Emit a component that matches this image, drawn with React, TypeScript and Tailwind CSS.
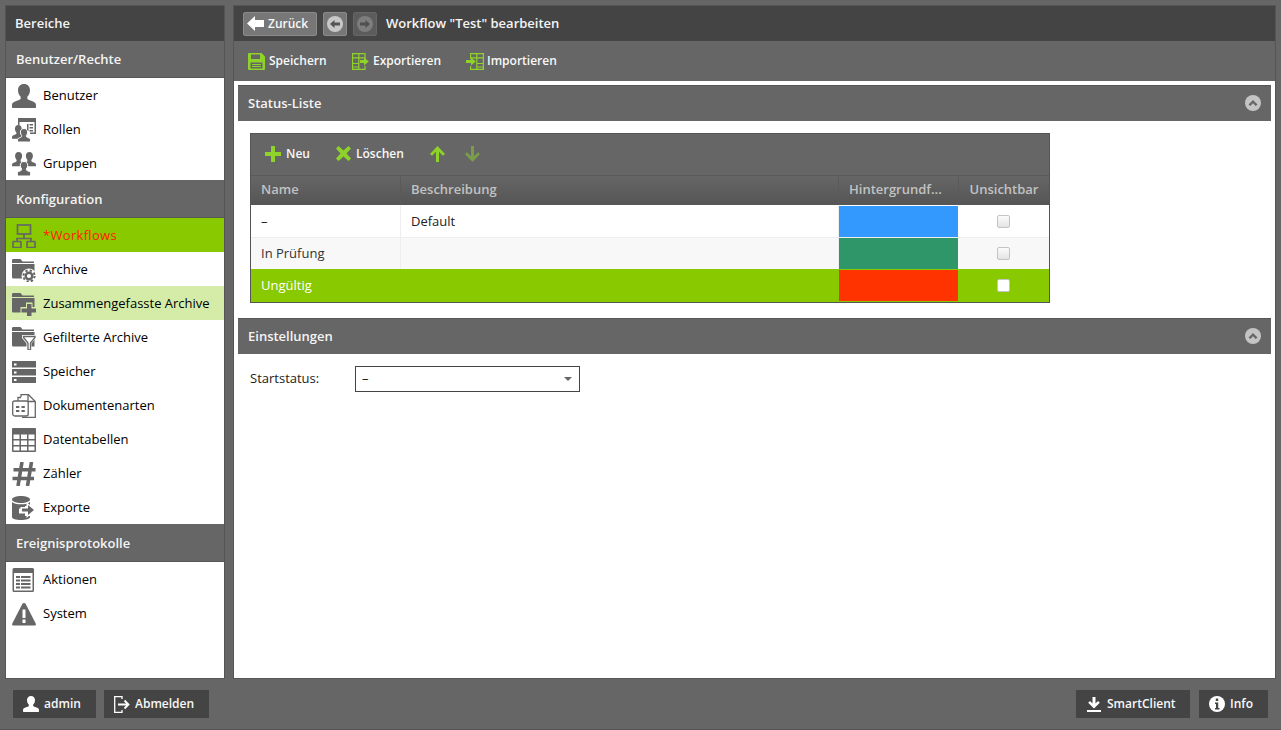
import React from "react";

const G = "#666666";
const L = "#8fd32a";

type P = { size?: number; c?: string };

const User = ({ size = 24, c = G }: P) => (
  <svg width={size} height={size} viewBox="0 0 24 24" fill={c}>
    <path d="M12 0c3.700 0 6 2.600 6 6.200 0 2.700-1.100 5-2.700 6.600v1.800c0 .8 1.200 1.300 3 2 2.700 1 5.700 1.800 5.700 4.400v2c0 .6-.4 1-1 1H1c-.6 0-1-.4-1-1v-2c0-2.600 3-3.400 5.700-4.400 1.800-.7 3-1.200 3-2v-1.800C7.100 11.200 6 8.900 6 6.200 6 2.600 8.300 0 12 0z" />
  </svg>
);

const Person = ({ x, y, s, c = G }: { x: number; y: number; s: number; c?: string }) => (
  <path
    transform={`translate(${x} ${y}) scale(${s})`}
    fill={c}
    d="M6 0c2 0 3.200 1.500 3.200 3.500 0 1.500-.6 2.800-1.400 3.700v1c0 .6 1 1 2 1.300 1.200.4 2.200.9 2.200 2.100V13H0v-1.400c0-1.200 1-1.700 2.200-2.100 1-.3 2-.7 2-1.300v-1C3.400 6.300 2.800 5 2.800 3.500 2.800 1.500 4 0 6 0z"
  />
);

const Roles = () => (
  <svg width="24" height="24" viewBox="0 0 24 24" fill={G}>
    <path d="M6 0h18v16h-6v-1.500h4.500V4H7.500v3H6z" />
    <path d="M15 6h1.500v7H15zM17.500 6H21v1.500h-3.500zM17.500 9H21v1.500h-3.500zM17.500 12H21v1.500h-3.500z" />
    <Person x={0} y={7} s={1.05} />
    <path d="M12 10.500c2.200 0 3.600 1.600 3.600 3.700 0 1.400-.5 2.600-1.300 3.400v.7c0 .7 1 1 2.200 1.500 1.100.4 2 .9 2 1.900V24H5.500v-2.300c0-1 .9-1.500 2-1.900 1.200-.5 2.200-.8 2.200-1.500v-.7c-.8-.8-1.300-2-1.300-3.400 0-2.100 1.400-3.700 3.600-3.700z" stroke="#fff" strokeWidth="1" />
  </svg>
);

const Groups = () => (
  <svg width="24" height="24" viewBox="0 0 24 24">
    <Person x={0} y={0} s={1.1} />
    <Person x={10.8} y={0} s={1.1} />
    <path d="M12 9.500c2.300 0 3.700 1.600 3.700 3.800 0 1.400-.5 2.700-1.300 3.500v.9c0 .7 1 1 2.200 1.500 1.100.4 2 .9 2 2V24H5.400v-2.800c0-1.100.9-1.600 2-2 1.200-.5 2.200-.8 2.200-1.500v-.9c-.8-.8-1.300-2.100-1.300-3.500 0-2.200 1.400-3.800 3.700-3.800z" fill={G} stroke="#fff" strokeWidth="1" />
  </svg>
);

const Network = () => (
  <svg width="24" height="24" viewBox="0 0 24 24" fill="none" stroke={G} strokeWidth="1.700">
    <rect x="5.500" y="1" width="13" height="9" />
    <path d="M12 10v4M5 18v-3.500h14V18" />
    <rect x="1" y="17.500" width="8" height="6" rx="0.500" />
    <rect x="15" y="17.500" width="8" height="6" rx="0.500" />
  </svg>
);

const Folder = ({ children }: { children?: React.ReactNode }) => (
  <svg width="24" height="24" viewBox="0 0 24 24">
    <path d="M0 2.500C0 1.500.5 1 1.500 1h7l2 2.500H22V5H0z" fill={G} />
    <path d="M0 6h22.500v14.500H1.500C.5 20.500 0 20 0 19z" fill={G} />
    {children}
  </svg>
);

const Gear = () => (
  <g>
    <circle cx="17" cy="18" r="7.500" fill="#fff" />
    <circle cx="17" cy="18" r="5.600" fill="none" stroke={G} strokeWidth="2" strokeDasharray="2.300 2.100" />
    <circle cx="17" cy="18" r="3.300" fill="#fff" stroke={G} strokeWidth="2.400" />
  </g>
);

const PlusFolder = () => (
  <Folder>
    <path d="M14 10.500h6.500V15H24v6.500h-3.500V24H14v-2.500H8.500V15H14z" fill="#d5eca8" />
    <path d="M15 12h4.500v4.500H24v4h-4.500V24H15v-3.500H9.500v-4H15z" fill={G} />
  </Folder>
);

const FunnelFolder = () => (
  <Folder>
    <path d="M10 9h14v3l-4.500 5.500V25h-5v-7.500L10 12z" fill="#fff" />
    <path d="M11.500 10.500h11.500v1l-4.500 5.500v7h-2.500v-7l-4.500-5.500z" fill="none" stroke={G} strokeWidth="1.300" />
  </Folder>
);

const Storage = () => (
  <svg width="24" height="24" viewBox="0 0 24 24" fill={G}>
    <path d="M0 1h24v6.500H0zM0 9h24v6.500H0zM0 17h24v6H0z" fill={G} />
    <path d="M2 3.500h2.500v2H2zM2 11.500h2.500v2H2zM2 19h2.500v2H2z" fill="#fff" />
  </svg>
);

const DocType = () => (
  <svg width="24" height="24" viewBox="0 0 24 24" fill="none" stroke={G} strokeWidth="1.300">
    <path d="M6 7V3.500h3M9 3V.7h7.500l6.800 6.800v15.800H10" />
    <path d="M16 1v6.500h7" />
    <rect x="0.700" y="7" width="15.500" height="15" rx="2" fill="#fff" />
    <path d="M4 12h3.300v2H4zM9.500 12h3.300v2H9.500zM4 16h3.300v2H4zM9.500 16h3.300v2H9.500z" fill={G} stroke="none" />
  </svg>
);

const TableIcon = () => (
  <svg width="24" height="24" viewBox="0 0 24 24" fill={G}>
    <path fillRule="evenodd" d="M1 0h22a1 1 0 0 1 1 1v22a1 1 0 0 1-1 1H1a1 1 0 0 1-1-1V1a1 1 0 0 1 1-1zM1.500 6.500v4.500h6V6.500zM9 6.500v4.500h6V6.500zM16.500 6.500v4.500h6V6.500zM1.500 12.500V17h6v-4.500zM9 12.500V17h6v-4.500zM16.500 12.500V17h6v-4.500zM1.500 18.500v4h6v-4zM9 18.500v4h6v-4zM16.500 18.500v4h6v-4z" />
  </svg>
);

const Hash = () => (
  <svg width="24" height="24" viewBox="0 0 24 24" fill="none" stroke={G} strokeWidth="3.600">
    <path d="M10 0L6 24M19.500 0l-4 24M1.500 7.800H23.500M.5 16.500H22" />
  </svg>
);

const Export = () => (
  <svg width="24" height="24" viewBox="0 0 24 24" fill={G}>
    <path d="M0 3.500C0 1.500 4.500 0 9 0s9 1.500 9 3.500S13.500 7 9 7 0 5.500 0 3.500z" />
    <path d="M0 6c1.500 1.500 5 2.300 9 2.300S16.500 7.500 18 6v4h-5v2.500H7v5h6V20h5v1c0 1.800-4 3-9 3s-9-1.200-9-3z" />
    <path d="M14.500 6l9.500 8-9.500 8v-5H8.500v-6h6z" fill="#fff" />
    <path d="M16 9l6 5-6 5v-3.500H10v-3h6z" fill={G} />
  </svg>
);

const Actions = () => (
  <svg width="24" height="24" viewBox="0 0 24 24" fill={G}>
    <path fillRule="evenodd" d="M2 0h18.500a1.500 1.500 0 0 1 1.500 1.500v21a1.500 1.500 0 0 1-1.500 1.500H2a1.500 1.500 0 0 1-1.500-1.500v-21A1.500 1.500 0 0 1 2 0zM2 5v17.500h18.500V5z" />
    <path d="M4 8h4v2H4zM9 8h9.500v2H9zM4 11.500h4v2H4zM9 11.500h9.500v2H9zM4 15h4v2H4zM9 15h9.500v2H9zM4 18.500h4v2H4zM9 18.500h9.500v2H9z" />
  </svg>
);

const Warn = () => (
  <svg width="24" height="24" viewBox="0 0 24 24">
    <path d="M12 1c.8 0 1.300.4 1.700 1.100l10 19.300c.6 1.200 0 2.100-1.300 2.100H1.600C.3 23.500-.3 22.600.3 21.400l10-19.300C10.700 1.400 11.200 1 12 1z" fill={G} />
    <path d="M10.500 7.500h3v8.500h-3zM10.500 17.500h3V21h-3z" fill="#fff" />
  </svg>
);

const Save = () => (
  <svg width="17" height="17" viewBox="0 0 17 17" fill={L}>
    <path fillRule="evenodd" d="M0 1a1 1 0 0 1 1-1h12.500L17 3.500V16a1 1 0 0 1-1 1H1a1 1 0 0 1-1-1zM3 1.500V6h9V1.500zM2.500 9.500V15.500h12V9.500zM4 11h9v1H4zM4 13h9v1H4z" />
  </svg>
);

const TableArrowRight = () => (
  <svg width="17" height="17" viewBox="0 0 17 17" fill="none" stroke={L} strokeWidth="1.200">
    <path d="M13 6V.6H.6v15.800H13V13" />
    <path d="M.6 4.800H13M.6 10.500h6.500M.6 14H7M6.800.6v15.800" />
    <path d="M8 7h4V4.500L16.800 8.500 12 12.500V10H8z" fill={L} stroke="none" />
  </svg>
);

const TableArrowLeft = () => (
  <svg width="18" height="17" viewBox="0 0 18 17" fill="none" stroke={L} strokeWidth="1.200">
    <path d="M4.600 6V.6h12.800v15.800H4.600V13" />
    <path d="M4.600 4.800h12.800M10.500 10.500h6.900M10.500 14h6.900M10.800.6v15.800" />
    <path d="M0 7h5V4.500L9.800 8.500 5 12.500V10H0z" fill={L} stroke="none" />
  </svg>
);

const SideItem = ({
  icon,
  label,
  cls = "",
}: {
  icon: React.ReactNode;
  label: string;
  cls?: string;
}) => (
  <div className={`h-[34px] flex items-center pl-[6px] pt-[2px] text-[13px] text-black ${cls}`}>
    <span className="w-[24px] h-[24px] flex shrink-0">{icon}</span>
    <span className="ml-[7px]">{label}</span>
  </div>
);

const SideHead = ({ label, h = "h-[38px]" }: { label: string; h?: string }) => (
  <div className={`${h} flex items-center pl-[10px] pt-[2px] bg-[#666666] border-b border-[#555555] text-[13px] font-semibold text-[#f4f4f4]`}>
    {label}
  </div>
);

const Collapse = () => (
  <svg width="16" height="16" viewBox="0 0 16 16" className="-mt-px">
    <circle cx="8" cy="8" r="8" fill="#c4c4c4" />
    <path d="M3.500 9.500L8 5l4.500 4.500-1.800 1.500L8 8.300 5.300 11z" fill="#666666" />
  </svg>
);

const Panel = ({ label, cls = "" }: { label: string; cls?: string }) => (
  <div className={`h-[36px] mx-[4px] bg-[#666666] border-t border-[#555555] flex items-center justify-between pl-[10px] pr-[10px] text-[13px] font-semibold text-[#f4f4f4] ${cls}`}>
    <span>{label}</span>
    <Collapse />
  </div>
);

const Check = ({ bright = false }: { bright?: boolean }) => (
  <span
    className={`block w-[13px] h-[13px] rounded-[2px] border border-[#c4c4c4] ${
      bright ? "bg-white" : "bg-gradient-to-b from-[#fbfbfb] to-[#e4e4e4]"
    }`}
  />
);

const TH = ({ label, cls = "" }: { label: string; cls?: string }) => (
  <div className={`flex items-center px-[10px] pb-[2px] border-r border-[#5a5a5a] last:border-r-0 text-[13px] font-semibold text-[#c2c2c2] whitespace-nowrap ${cls}`}>
    {label}
  </div>
);

const Row = ({
  name,
  desc,
  swatch,
  rowCls,
  borderCls,
  text,
  bright,
  cellCls = "",
}: {
  name: string;
  desc: string;
  swatch: React.ReactNode;
  rowCls: string;
  borderCls: string;
  text: string;
  bright?: boolean;
  cellCls?: string;
}) => (
  <div className={`grid grid-cols-[150px_438px_120px_90px] text-[13px] ${rowCls} ${text}`}>
    <div className={`flex items-center px-[10px] border-r ${borderCls} ${cellCls}`}>{name}</div>
    <div className={`flex items-center px-[10px] border-r ${borderCls} ${cellCls}`}>{desc}</div>
    {swatch}
    <div className="flex items-center justify-center pr-[2px]">
      <Check bright={bright} />
    </div>
  </div>
);

const FootBtn = ({ icon, label, cls }: { icon: React.ReactNode; label: string; cls: string }) => (
  <div className={`h-[28px] bg-[#444444] flex items-center text-[12px] font-semibold text-[#f8f8f8] ${cls}`}>
    {icon}
    <span>{label}</span>
  </div>
);

const ToolBtn = ({ icon, label, cls }: { icon: React.ReactNode; label: string; cls: string }) => (
  <div className={`flex items-center text-[12px] font-semibold text-[#f8f8f8] ${cls}`}>
    {icon}
    <span>{label}</span>
  </div>
);

export default function App() {
  return (
    <div
      className="w-[1281px] h-[730px] bg-[#666666] flex flex-col overflow-hidden border-b border-[#555555]"
      style={{ fontFamily: '"Open Sans", "Noto Sans", sans-serif' }}
    >
      <div className="flex h-[679px] pt-[5px] pl-[5px] gap-[8px]">
        {/* sidebar */}
        <aside className="w-[220px] h-[674px] border border-[#555555] bg-white flex flex-col shrink-0">
          <div className="h-[35px] bg-[#444444] flex items-center pl-[9px] text-[13px] font-semibold text-[#f4f4f4]">
            Bereiche
          </div>
          <SideHead label="Benutzer/Rechte" h="h-[37px]" />
          <SideItem icon={<User />} label="Benutzer" />
          <SideItem icon={<Roles />} label="Rollen" />
          <SideItem icon={<Groups />} label="Gruppen" />
          <SideHead label="Konfiguration" />
          <SideItem icon={<Network />} label="*Workflows" cls="bg-[#88c900] !text-[#ff1a00] tracking-[0.3px]" />
          <SideItem icon={<Folder><Gear /></Folder>} label="Archive" />
          <SideItem icon={<PlusFolder />} label="Zusammengefasste Archive" cls="bg-[#d5eca8]" />
          <SideItem icon={<FunnelFolder />} label="Gefilterte Archive" />
          <SideItem icon={<Storage />} label="Speicher" />
          <SideItem icon={<DocType />} label="Dokumentenarten" />
          <SideItem icon={<TableIcon />} label="Datentabellen" />
          <SideItem icon={<Hash />} label="Zähler" />
          <SideItem icon={<Export />} label="Exporte" />
          <SideHead label="Ereignisprotokolle" />
          <SideItem icon={<Actions />} label="Aktionen" />
          <SideItem icon={<Warn />} label="System" />
        </aside>

        {/* main */}
        <main className="w-[1043px] h-[674px] border border-[#555555] bg-white flex flex-col shrink-0">
          <div className="h-[35px] bg-[#444444] flex items-center pl-[9px] shrink-0">
            <div className="w-[74px] h-[24px] rounded-[2px] bg-[#777777] border border-[#8a8a8a] flex items-center pl-[3px] gap-[4px] text-[12px] font-semibold text-[#f8f8f8]">
              <svg width="17" height="15" viewBox="0 0 17 15" fill="#fff">
                <path d="M0 7.500L8 0v4h9v7H8v4z" />
              </svg>
              <span>Zurück</span>
            </div>
            <div className="ml-[6px] w-[24px] h-[24px] rounded-[2px] bg-[#777777] border border-[#8a8a8a] flex items-center justify-center">
              <svg width="16" height="16" viewBox="0 0 16 16">
                <circle cx="8" cy="8" r="8" fill="#c8c8c8" />
                <path d="M3 8l4.500-4v2.500H13v3H7.500V12z" fill="#555555" />
              </svg>
            </div>
            <div className="ml-[6px] w-[24px] h-[24px] rounded-[2px] bg-[#5c5c5c] border border-[#666666] flex items-center justify-center">
              <svg width="16" height="16" viewBox="0 0 16 16">
                <circle cx="8" cy="8" r="8" fill="#7d7d7d" />
                <path d="M13 8L8.500 4v2.500H3v3h5.500V12z" fill="#505050" />
              </svg>
            </div>
            <span className="ml-[9px] text-[13px] font-semibold text-[#f4f4f4]">Workflow "Test" bearbeiten</span>
          </div>
          <div className="h-[40px] bg-[#666666] flex items-center pl-[14px] shrink-0">
            <ToolBtn icon={<Save />} label="Speichern" cls="w-[104px] gap-[4px]" />
            <ToolBtn icon={<TableArrowRight />} label="Exportieren" cls="w-[114px] gap-[4px]" />
            <ToolBtn icon={<TableArrowLeft />} label="Importieren" cls="gap-[3px]" />
          </div>

          <Panel label="Status-Liste" cls="mt-[4px]" />

          <div className="mt-[12px] ml-[16px] w-[800px] h-[170px] border border-[#555555] flex flex-col">
            <div className="h-[41px] bg-[#666666] flex items-center pl-[14px] pb-[2px] text-[12px] font-semibold text-[#f8f8f8] shrink-0">
              <div className="flex items-center gap-[5px] w-[71px]">
                <svg width="16" height="16" viewBox="0 0 16 16" fill={L}>
                  <path d="M6 0h4v6h6v4h-6v6H6v-6H0V6h6z" />
                </svg>
                <span>Neu</span>
              </div>
              <div className="flex items-center gap-[5px] w-[94px]">
                <svg width="15" height="15" viewBox="0 0 15 15" fill={L}>
                  <path d="M2.500 0L7.500 4.500 12.500 0 15 2.500 10.500 7.500 15 12.500 12.500 15 7.500 10.500 2.500 15 0 12.500 4.500 7.500 0 2.500z" />
                </svg>
                <span>Löschen</span>
              </div>
              <svg className="w-[15px] h-[16px] mr-[20px]" viewBox="0 0 15 16" fill={L}>
                <path d="M7.500 0L15 8l-2 1.800-4-4V16H6V5.800l-4 4L0 8z" />
              </svg>
              <svg className="w-[15px] h-[16px]" viewBox="0 0 15 16" fill="#7a9e48">
                <path d="M7.500 16L15 8l-2-1.800-4 4V0H6v10.200l-4-4L0 8z" />
              </svg>
            </div>
            <div className="h-[30px] grid grid-cols-[150px_438px_120px_90px] bg-gradient-to-b from-[#666666] to-[#555555] border-t border-[#5a5a5a] shrink-0">
              <TH label="Name" />
              <TH label="Beschreibung" />
              <TH label="Hintergrundf..." />
              <TH label="Unsichtbar" cls="justify-center px-0" />
            </div>
            <Row
              name="–"
              desc="Default"
              swatch={<div className="pt-px pr-px"><div className="h-full bg-[#3399ff]" /></div>}
              rowCls="h-[33px] bg-white border-b border-[#eeeeee]"
              borderCls="border-[#eeeeee]"
              cellCls="pt-[2px]"
              text="text-[#222222]"
            />
            <Row
              name="In Prüfung"
              desc=""
              swatch={<div className="pr-px"><div className="h-full bg-[#2e9669]" /></div>}
              rowCls="h-[31px] bg-[#f8f8f8]"
              borderCls="border-[#eeeeee]"
              text="text-[#333333]"
            />
            <Row
              name="Ungültig"
              desc=""
              swatch={<div className="py-px pr-px"><div className="h-full bg-[#ff3300]" /></div>}
              rowCls="h-[33px] bg-[#88c900]"
              borderCls="border-[#88c900]"
              text="text-white"
              bright
            />
          </div>

          <Panel label="Einstellungen" cls="mt-[15px]" />

          <div className="mt-[12px] ml-[16px] flex items-center">
            <span className="w-[105px] text-[13px] text-[#222222]">Startstatus:</span>
            <div className="w-[225px] h-[26px] border border-[#444444] bg-white flex items-center justify-between pl-[6px] pr-[7px] text-[13px] text-[#222222]">
              <span>–</span>
              <svg width="8" height="4" viewBox="0 0 8 4" fill="#666666">
                <path d="M0 0h8L4 4z" />
              </svg>
            </div>
          </div>
        </main>
      </div>

      {/* footer */}
      <footer className="flex items-start pt-[11px] pl-[13px] pr-[13px]">
        <FootBtn icon={<User size={16} c="#ffffff" />} label="admin" cls="w-[83px] pl-[10px] gap-[5px]" />
        <FootBtn
          icon={
            <svg width="16" height="17" viewBox="0 0 16 17" fill="none" stroke="#fff" strokeWidth="1.300">
              <path d="M8 3V.7H.7v15.600H8V14" />
              <path d="M4 8.500h10M10.500 4.500l4 4-4 4" strokeWidth="1.800" />
            </svg>
          }
          label="Abmelden"
          cls="ml-[8px] w-[105px] pl-[10px] gap-[5px]"
        />
        <div className="ml-auto flex gap-[9px]">
          <FootBtn
            icon={
              <svg width="14" height="15" viewBox="0 0 14 15" fill="#fff">
                <path d="M5.500 0h3v6.500L11 4l1.800 1.800L7 11.500 1.200 5.800 3 4l2.500 2.500z" />
                <path d="M0 13h14v2H0z" />
              </svg>
            }
            label="SmartClient"
            cls="w-[114px] pl-[11px] gap-[6px]"
          />
          <FootBtn
            icon={
              <svg width="16" height="16" viewBox="0 0 16 16">
                <circle cx="8" cy="8" r="8" fill="#fff" />
                <path d="M6.800 2.500h2.400v2.400H6.800zM6 6.500h3.200v5.500H10.500v1.500h-4.500V12h1V8H6z" fill="#444444" />
              </svg>
            }
            label="Info"
            cls="w-[69px] pl-[10px] gap-[5px]"
          />
        </div>
      </footer>
    </div>
  );
}
